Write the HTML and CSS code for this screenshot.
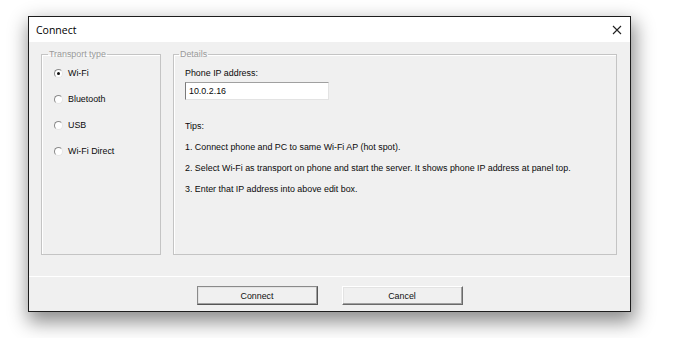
FILE: index.html
```html
<!DOCTYPE html>
<html lang="en">
<head>
<meta charset="UTF-8">
<title>Connect</title>
<link rel="stylesheet" href="styles.css">
</head>
<body>
<div class="window">
  <div class="titlebar">
    <span class="title">Connect</span>
    <svg class="close" width="10" height="10" viewBox="0 0 10 10"><path d="M1 1L9 9M9 1L1 9" stroke="#222" stroke-width="1.1"/></svg>
  </div>
  <div class="client">
    <div class="main">
      <fieldset class="group transport">
        <legend>Transport type</legend>
        <label class="radio"><span class="dot on"></span>Wi-Fi</label>
        <label class="radio"><span class="dot"></span>Bluetooth</label>
        <label class="radio"><span class="dot"></span>USB</label>
        <label class="radio"><span class="dot"></span>Wi-Fi Direct</label>
      </fieldset>
      <fieldset class="group details">
        <legend>Details</legend>
        <div class="lbl">Phone IP address:</div>
        <div class="edit">10.0.2.16</div>
        <div class="tips">Tips:</div>
        <p>1. Connect phone and PC to same Wi-Fi AP (hot spot).</p>
        <p>2. Select Wi-Fi as transport on phone and start the server. It shows phone IP address at panel top.</p>
        <p>3. Enter that IP address into above edit box.</p>
      </fieldset>
    </div>
    <div class="footer">
      <button class="btn default">Connect</button>
      <button class="btn">Cancel</button>
    </div>
  </div>
</div>
</body>
</html>
```
FILE: styles.css
```css
html{background:#fff}
body{margin:0;padding:16px 0 30px 28px;font-family:'Liberation Sans',sans-serif;font-size:8.9px;color:#0a0a0a}
.window{width:601px;height:294px;border:1px solid #1c1c1c;box-shadow:2px 8px 18px 2px rgba(0,0,0,.45);display:flex;flex-direction:column;position:relative}
.titlebar{height:25px;background:#fff;display:flex;align-items:center;justify-content:space-between;padding:0 8px 0 7px}
.title{font-family:'Open Sans',sans-serif;font-size:10.5px;color:#000}
.close{margin-top:1px}
.client{flex:1;background:#f0f0f0;display:flex;flex-direction:column}
.main{height:228px;padding:6px 13px 0 12px;display:flex;gap:12px}
.group{margin:0;border:1px solid #c4c4c4;box-shadow:inset 1px 1px 0 #fff;padding:0;box-sizing:border-box;height:207px}
.group legend{color:#9a9a9a;padding:0 1px;margin-left:-6px;line-height:12px}
.transport{width:120px;padding:7px 0 0 12px}
.details{flex:1;padding:7px 0 0 11px}
.radio{display:flex;align-items:center;height:12px;margin-bottom:14px}
.dot{width:7px;height:7px;border-radius:50%;border:1px solid #8a8a8a;border-right-color:#e6e6e6;border-bottom-color:#e6e6e6;background:#fff;margin-right:5px;display:flex;align-items:center;justify-content:center}
.dot.on::after{content:"";width:3px;height:3px;border-radius:50%;background:#111}
.lbl{line-height:12px}
.edit{width:139px;height:16px;margin-top:3px;background:#fff;border:1px solid #e3e3e3;border-top-color:#a0a0a0;border-left-color:#7a7a7a;padding-left:3px;line-height:16px}
.tips{margin-top:20px;line-height:12px}
.details p{margin:9px 0 0;line-height:12px}
.footer{flex:1;border-top:1px solid #fff;display:flex;justify-content:center;gap:24px;padding-top:9px}
.btn{width:121px;height:19px;padding:0;font:inherit;color:#111;background:#f0f0f0;border:1px solid;border-color:#fff #6a6a6a #6a6a6a #fff;box-shadow:inset -1px -1px 0 #a0a0a0,inset 1px 1px 0 #e3e3e3}
.btn.default{border-color:#8a8a8a #555 #555 #8a8a8a}
```
